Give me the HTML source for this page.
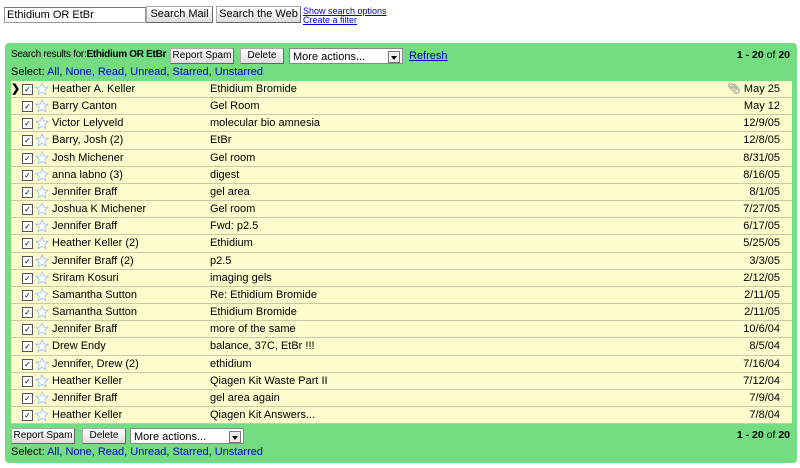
<!DOCTYPE html>
<html><head><style>
body{margin:0;width:800px;height:468px;background:#fff;font-family:"Liberation Sans",Arial,sans-serif;font-size:11px;position:relative;overflow:hidden}
.abs{position:absolute;white-space:nowrap}
.btn{position:absolute;height:14px;border:1px solid #aaa;border-right-color:#666;border-bottom-color:#666;background:linear-gradient(#fff,#ddd);font-size:10px;line-height:14px;text-align:center;box-sizing:content-box;white-space:nowrap}
.btn2{font-size:11px;height:15px;line-height:15px}
a{color:#00c}
.sel{position:absolute;height:16px;background:#fff;border:1px solid #888;font-size:11px;line-height:16px;padding-left:3px;box-sizing:border-box}
.sel i{position:absolute;right:2px;top:2px;width:10px;height:10px;border:1px solid #777;background:#eee}
.sel i:after{content:"";position:absolute;left:2px;top:4px;border:3px solid transparent;border-top:4px solid #000}
#green{left:5px;top:43px;width:792px;height:420px;background:#74dd82;border-radius:4px}
.row{position:absolute;left:11px;width:781px;height:16px;background:#fdfccd;border-bottom:1px solid #c9c9a8;font-size:11px;line-height:17px}
.row .cb{position:absolute;left:11px;top:3px;width:9px;height:9px;border:1px solid #555;background:#fff;font-size:8px;line-height:9px;text-align:center}
.row svg{position:absolute;left:24px;top:1px}
.row .n{position:absolute;left:41px}
.row .s{position:absolute;left:199px}
.row .d{position:absolute;right:12px}
.blue{color:#00c}
</style></head><body>
<div class="abs" style="left:4px;top:7px;width:138px;height:14px;border:1px solid #999;border-top-color:#777;font-size:11px;line-height:14px;padding-left:2px">Ethidium OR EtBr</div>
<div class="btn btn2" style="left:146px;top:6px;width:65px">Search Mail</div>
<div class="btn btn2" style="left:216px;top:6px;width:83px">Search the Web</div>
<div class="abs" style="left:303px;top:7px;font-size:9px;line-height:9px"><a href="#">Show search options</a><br><a href="#">Create a filter</a></div>
<div id="green" class="abs"></div>
<div class="abs" style="left:11px;top:49px;font-size:10px;letter-spacing:-0.3px">Search results for:<b>Ethidium OR EtBr</b></div>
<div class="btn" style="left:170px;top:48px;width:62px">Report Spam</div>
<div class="btn" style="left:240px;top:48px;width:42px">Delete</div>
<div class="sel" style="left:289px;top:48px;width:114px">More actions...<i></i></div>
<div class="abs" style="left:409px;top:50px"><a href="#">Refresh</a></div>
<div class="abs" style="right:10px;top:49px;font-size:10.5px"><b>1 - 20</b> of <b>20</b></div>
<div class="abs" style="left:11px;top:66px">Select: <span class="blue">All</span>, <span class="blue">None</span>, <span class="blue">Read</span>, <span class="blue">Unread</span>, <span class="blue">Starred</span>, <span class="blue">Unstarred</span></div>

<div id="rows"></div>
<script>
var d=[["Heather A. Keller","Ethidium Bromide","May 25"],["Barry Canton","Gel Room","May 12"],["Victor Lelyveld","molecular bio amnesia","12/9/05"],["Barry, Josh (2)","EtBr","12/8/05"],["Josh Michener","Gel room","8/31/05"],["anna labno (3)","digest","8/16/05"],["Jennifer Braff","gel area","8/1/05"],["Joshua K Michener","Gel room","7/27/05"],["Jennifer Braff","Fwd: p2.5","6/17/05"],["Heather Keller (2)","Ethidium","5/25/05"],["Jennifer Braff (2)","p2.5","3/3/05"],["Sriram Kosuri","imaging gels","2/12/05"],["Samantha Sutton","Re: Ethidium Bromide","2/11/05"],["Samantha Sutton","Ethidium Bromide","2/11/05"],["Jennifer Braff","more of the same","10/6/04"],["Drew Endy","balance, 37C, EtBr !!!","8/5/04"],["Jennifer, Drew (2)","ethidium","7/16/04"],["Heather Keller","Qiagen Kit Waste Part II","7/12/04"],["Jennifer Braff","gel area again","7/9/04"],["Heather Keller","Qiagen Kit Answers...","7/8/04"]];
var h="",star='<svg width="14" height="14" viewBox="0 0 14 14"><polygon points="7,1 8.8,5 13,5.3 9.8,8.2 10.8,12.6 7,10.3 3.2,12.6 4.2,8.2 1,5.3 5.2,5" fill="#fff" stroke="#a8c8ee" stroke-width="1"/></svg>';
for(var i=0;i<20;i++){var t=Math.round(81+i*17.16),hh=Math.round(81+(i+1)*17.16)-t-1;
h+='<div class="row" style="top:'+t+'px;height:'+hh+'px">'+(i==0?'<span class="abs" style="left:0;font-weight:bold">&#x276F;</span>':'')+'<span class="cb">✓</span>'+star+'<span class="n">'+d[i][0]+'</span><span class="s">'+d[i][1]+'</span><span class="d">'+(i==0?'<span style="color:#777">&#x1F4CE;&#xFE0E;</span> ':'')+d[i][2]+'</span></div>';}
document.getElementById("rows").innerHTML=h;
</script>
<div class="btn" style="left:11px;top:428px;width:62px">Report Spam</div>
<div class="btn" style="left:82px;top:428px;width:42px">Delete</div>
<div class="sel" style="left:130px;top:428px;width:114px">More actions...<i></i></div>
<div class="abs" style="right:10px;top:429px;font-size:10.5px"><b>1 - 20</b> of <b>20</b></div>
<div class="abs" style="left:11px;top:446px">Select: <span class="blue">All</span>, <span class="blue">None</span>, <span class="blue">Read</span>, <span class="blue">Unread</span>, <span class="blue">Starred</span>, <span class="blue">Unstarred</span></div>
</body></html>
